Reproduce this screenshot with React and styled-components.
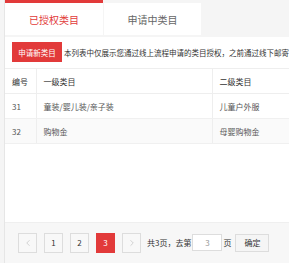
import React, { useState } from 'react'
import styled, { createGlobalStyle } from 'styled-components'
import { ChevronLeft, ChevronRight } from 'lucide-react'

const GlobalStyle = createGlobalStyle`
  html, body {
    margin: 0;
    padding: 0;
    background: #f5f5f5;
    font-family: "Noto Sans CJK SC", "Noto Sans", sans-serif;
  }
`;

const red = '#e23a3a';

const Page = styled.div`
  height: 263px;
  padding-left: 4px;
  display: flex;
  flex-direction: column;
  overflow: hidden;
`;

const Frame = styled.div`
  flex: 1;
  display: flex;
  flex-direction: column;
  border-left: 1px solid #e6e6e6;
  min-width: 0;
`;

const TabBar = styled.div`
  height: 35px;
  display: flex;
  gap: 1px;
  margin-bottom: 2px;
`;

const Tab = styled.div`
  width: ${p => (p.$active ? '98px' : '97px')};
  margin-top: ${p => (p.$active ? '0' : '3px')};
  border-top: ${p => (p.$active ? `3px solid ${red}` : 'none')};
  background: #fff;
  color: ${p => (p.$active ? red : '#666')};
  font-size: 10px;
  display: flex;
  align-items: center;
  justify-content: center;
  box-sizing: border-box;
  cursor: pointer;
`;

const Content = styled.div`
  flex: 1;
  background: #fff;
  overflow: hidden;
  padding-top: 5px;
`;

const Toolbar = styled.div`
  display: flex;
  align-items: center;
  gap: 2px;
  padding-left: 7px;
  white-space: nowrap;
`;

const NewButton = styled.button`
  width: 50px;
  height: 20px;
  flex-shrink: 0;
  border: none;
  background: ${red};
  color: #fff;
  font-family: inherit;
  font-size: 7.5px;
  padding: 0;
  cursor: pointer;
`;

const Notice = styled.span`
  font-size: 7.5px;
  color: #333;
`;

const Table = styled.table`
  margin-top: 6px;
  width: 420px;
  border-collapse: collapse;
  table-layout: fixed;
  font-size: 8px;
`;

const HeadCell = styled.th`
  height: 24px;
  padding: 0 7px;
  text-align: left;
  font-weight: normal;
  color: #333;
  border-top: 1px solid #eee;
  border-bottom: 1px solid #eee;
  & + & {
    border-left: 1px solid #eee;
  }
`;

const Row = styled.tr`
  background: ${p => (p.$striped ? '#fafafa' : '#fff')};
`;

const Cell = styled.td`
  height: 24px;
  padding: 0 7px;
  color: #555;
  border-bottom: 1px solid #f0f0f0;
  & + & {
    border-left: 1px solid #eee;
  }
`;

const Pager = styled.div`
  height: 41px;
  box-sizing: border-box;
  background: #f7f7f7;
  border-top: 1px solid #efefef;
  display: flex;
  align-items: center;
  padding-left: 13px;
  padding-bottom: 1px;
  font-size: 8px;
  color: #333;
  white-space: nowrap;
`;

const PageButton = styled.button`
  width: 19px;
  height: 20px;
  margin-right: 7px;
  padding: 0;
  box-sizing: border-box;
  display: flex;
  align-items: center;
  justify-content: center;
  border: 1px solid ${p => (p.$current ? red : '#ddd')};
  background: ${p => (p.$current ? red : '#f8f8f8')};
  color: ${p => (p.$current ? '#fff' : '#333')};
  font-family: inherit;
  font-size: 8px;
  cursor: pointer;
`;

const Jump = styled.span`
  margin-left: -1px;
`;

const PageInput = styled.input`
  width: 30px;
  height: 17px;
  box-sizing: border-box;
  margin: 0 1px;
  border: 1px solid #ddd;
  background: #fff;
  color: #999;
  text-align: center;
  font-family: inherit;
  font-size: 8px;
  padding: 0;
  outline: none;
`;

const ConfirmButton = styled.button`
  width: 34px;
  height: 18px;
  margin-left: 4px;
  padding: 0;
  box-sizing: border-box;
  border: 1px solid #ddd;
  background: #f5f5f5;
  color: #333;
  font-family: inherit;
  font-size: 8px;
  cursor: pointer;
`;

const rows = [
  { id: 31, first: '童装/婴儿装/亲子装', second: '儿童户外服' },
  { id: 32, first: '购物金', second: '母婴购物金' },
]

const App = () => {
  const [tab, setTab] = useState(0)
  const [page, setPage] = useState(3)
  const [jump, setJump] = useState('3')

  return <Page>
    <GlobalStyle />
    <Frame>
      <TabBar>
        <Tab $active={tab === 0} onClick={() => setTab(0)}>已授权类目</Tab>
        <Tab $active={tab === 1} onClick={() => setTab(1)}>申请中类目</Tab>
      </TabBar>
      <Content>
        <Toolbar>
          <NewButton>申请新类目</NewButton>
          <Notice>本列表中仅展示您通过线上流程申请的类目授权，之前通过线下邮寄资质申请的类目不在此展示</Notice>
        </Toolbar>
        <Table>
          <colgroup>
            <col style={{ width: 31 }} />
            <col style={{ width: 176 }} />
            <col />
          </colgroup>
          <thead>
            <tr>
              <HeadCell>编号</HeadCell>
              <HeadCell>一级类目</HeadCell>
              <HeadCell>二级类目</HeadCell>
            </tr>
          </thead>
          <tbody>
            {rows.map((r, i) => (
              <Row key={r.id} $striped={i % 2 === 1}>
                <Cell>{r.id}</Cell>
                <Cell>{r.first}</Cell>
                <Cell>{r.second}</Cell>
              </Row>
            ))}
          </tbody>
        </Table>
      </Content>
      <Pager>
        <PageButton onClick={() => setPage(Math.max(1, page - 1))}>
          <ChevronLeft size={10} strokeWidth={1.2} color="#aaa" />
        </PageButton>
        {[1, 2, 3].map(n => (
          <PageButton key={n} $current={n === page} onClick={() => setPage(n)}>{n}</PageButton>
        ))}
        <PageButton onClick={() => setPage(Math.min(3, page + 1))}>
          <ChevronRight size={10} strokeWidth={1.2} color="#aaa" />
        </PageButton>
        <Jump>共3页，去第</Jump>
        <PageInput value={jump} onChange={e => setJump(e.target.value)} />
        <span>页</span>
        <ConfirmButton>确定</ConfirmButton>
      </Pager>
    </Frame>
  </Page>
}

export default App
